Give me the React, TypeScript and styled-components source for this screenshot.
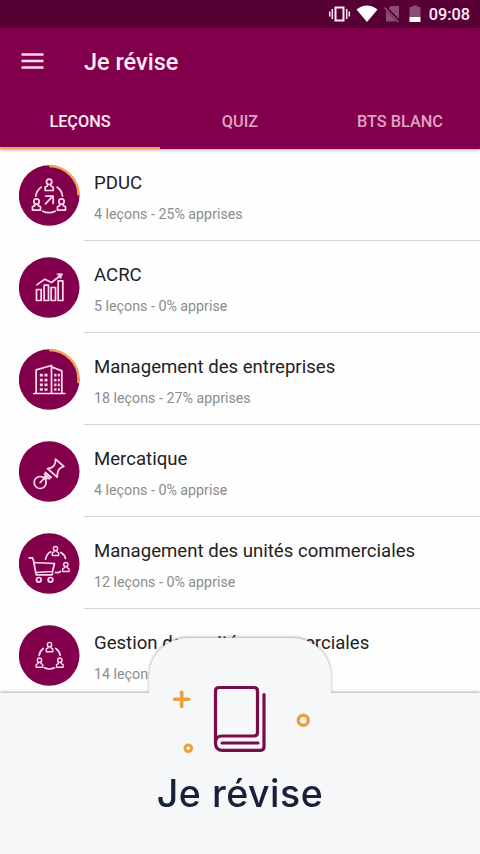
import { ReactNode } from 'react';
import styled, { createGlobalStyle } from 'styled-components';

const GlobalStyle = createGlobalStyle`
  * {
    box-sizing: border-box;
  }

  body {
    margin: 0;
    background-color: #fff;
    font-family: Roboto, 'Liberation Sans', sans-serif;
  }
`;

const Screen = styled.div`
  position: relative;
  display: flex;
  flex-direction: column;
  width: 480px;
  height: 854px;
  overflow: hidden;
  background-color: #fefefe;
`;

const StatusBar = styled.div`
  display: flex;
  justify-content: flex-end;
  align-items: center;
  flex-shrink: 0;
  height: 28px;
  padding-right: 10px;
  background-color: #560035;
`;

const Clock = styled.span`
  margin-left: 7px;
  padding-top: 2px;
  color: #ffeaf6;
  font-size: 16.3px;
  font-weight: 500;
  line-height: 20px;
`;

const Header = styled.header`
  z-index: 1;
  flex-shrink: 0;
  height: 121px;
  background-color: #82004b;
  box-shadow: 0 1px 3px rgba(0, 0, 0, 0.35);
`;

const Toolbar = styled.div`
  display: flex;
  align-items: center;
  height: 65px;
  padding-left: 21px;
`;

const MenuButton = styled.button`
  display: flex;
  padding: 0;
  border: 0;
  background: none;
`;

const Title = styled.h1`
  margin: 0 0 0 40px;
  padding-top: 2px;
  color: #ffeaf6;
  font-size: 23.5px;
  font-weight: 500;
`;

const Tabs = styled.nav`
  display: grid;
  grid-template-columns: repeat(3, 1fr);
  height: 56px;
`;

const Tab = styled.div<{ $active?: boolean }>`
  display: flex;
  justify-content: center;
  align-items: center;
  padding-top: 3px;
  border-bottom: 2px solid ${({ $active }) => ($active ? '#f1a263' : 'transparent')};
  color: ${({ $active }) => ($active ? '#ffeaf6' : '#e3a0c7')};
  font-size: 16.3px;
  font-weight: 500;
`;

const List = styled.main`
  display: flex;
  flex-direction: column;
  padding-top: 1px;
`;

const Row = styled.div`
  display: flex;
  flex-shrink: 0;
  height: 92px;
  padding: 15px 0 0 19px;
`;

const Info = styled.div`
  flex: 1;
  height: 76px;
  margin-left: 4px;
  padding: 6px 0 0 10px;
  border-bottom: 1px solid #d4d4d4;
`;

const Name = styled.div`
  color: #222;
  font-size: 18.6px;
  line-height: 24px;
  white-space: nowrap;
`;

const Detail = styled.div`
  margin-top: 9px;
  color: #8c8c8c;
  font-size: 14.25px;
  line-height: 20px;
`;

const BottomPanel = styled.footer`
  position: absolute;
  z-index: 2;
  right: 0;
  bottom: 0;
  left: 0;
  display: flex;
  flex-direction: column;
  align-items: center;
  height: 216px;
  filter: drop-shadow(0 -1px 1.5px rgba(0, 0, 0, 0.32));
`;

const Bump = styled.div`
  flex-shrink: 0;
  width: 182px;
  height: 55px;
  border-radius: 38px 38px 0 0;
  background-color: #f5f7f9;
`;

const PanelBody = styled.div`
  display: flex;
  flex-direction: column;
  align-items: center;
  width: 100%;
  height: 161px;
  background-color: #f5f7f9;
`;

const Illustration = styled.svg`
  flex-shrink: 0;
  margin-top: -13px;
`;

const Caption = styled.div`
  margin-top: 14px;
  color: #18203a;
  font-family: Inter, 'Liberation Sans', sans-serif;
  font-size: 37.5px;
  font-weight: 500;
  line-height: 48px;
  letter-spacing: 0.5px;
`;

type PersonProps = { x: number; y: number; size?: number };

// Head and shoulders, (x, y) is the centre of the head
const Person = ({ x, y, size = 1 }: PersonProps) => (
  <g transform={`translate(${x} ${y}) scale(${size})`}>
    <path d="M0 -9c5 0 8 4 8 8s-3 8-8 8-8-4-8-8 3-8 8-8z" />
    <path d="M-5 7v4l-7 4v10h24v-10l-7-4v-4" />
  </g>
);

const TeamIcon = () => (
  <>
    <Person x={118} y={81} />
    <Person x={80} y={140} />
    <Person x={155} y={140} />
    <path d="M78 123q2-17 16-27M142 96q14 9 16 27M99 168q19 9 37 0" />
    <path d="M107 146l22-23M108 123h22v22" />
  </>
);

const ChartIcon = () => (
  <>
    <path d="M80 127h14v33h-14zM103 114h13v46h-13zM124 121h13v39h-13zM145 101h14v59h-14z" />
    <path d="M81 113l24-17 20 10 27-21" />
    <path d="M142 80h16l-5 14z" fill="#ffd9ee" strokeWidth={2} />
  </>
);

const BuildingIcon = () => (
  <>
    <path d="M72 163h93M79 162v-70l46-13v83M125 83l31 12v67" />
    <path d="M90 108h25M90 123h25M90 137h25M90 151h25" strokeWidth={8} strokeDasharray="9 5" strokeLinecap="butt" />
    <path d="M133 108h17M133 123h17M133 137h17M133 151h17" strokeWidth={8} strokeDasharray="7 4" strokeLinecap="butt" />
  </>
);

const PinIcon = () => (
  <>
    <circle cx={91} cy={154} r={18} />
    <path d="M91 154l17-18" />
    <path d="M107 124l17 15M104 129l15 14M104 136l7 7" />
    <path d="M137 84l25 22q-12 3-16 11-4 8-4 21l-29-26q13 0 19-8 6-7 5-20z" />
  </>
);

const CartIcon = () => (
  <>
    <path d="M58 104h10l3 8 8 43h44q5 0 5-5M73 118l61 3-6 24-51 3" />
    <circle cx={87} cy={170} r={7} />
    <circle cx={122} cy={170} r={7} />
    <Person x={137} y={77} size={0.8} />
    <Person x={168} y={125} size={0.8} />
    <path d="M107 108q4-16 16-22M153 88q12 7 14 18M137 148q8 2 15-3" />
  </>
);

const NetworkIcon = () => (
  <>
    <Person x={119} y={89} size={0.82} />
    <Person x={89} y={136} size={0.82} />
    <Person x={150} y={136} size={0.82} />
    <path d="M88 121q1-12 12-21M138 100q11 8 13 20M104 158q15 7 30 0" />
  </>
);

type BadgeProps = { progress: number; children: ReactNode };

const Badge = ({ progress, children }: BadgeProps) => (
  <svg width={61} height={61} viewBox="27.5 29.5 183 183" fill="none">
    <circle cx={118} cy={121} r={91} fill="#82004b" />
    {progress > 0 && (
      <circle
        cx={118}
        cy={121}
        r={88}
        stroke="#f2a353"
        strokeWidth={7}
        pathLength={100}
        strokeDasharray={`${progress} 100`}
        transform="rotate(-90 118 121)"
      />
    )}
    <g stroke="#ffd9ee" strokeWidth={5.2} strokeLinecap="round" strokeLinejoin="round">
      {children}
    </g>
  </svg>
);

const lessons = [
  { name: 'PDUC', detail: '4 leçons - 25% apprises', progress: 25, icon: <TeamIcon /> },
  { name: 'ACRC', detail: '5 leçons - 0% apprise', progress: 0, icon: <ChartIcon /> },
  {
    name: 'Management des entreprises',
    detail: '18 leçons - 27% apprises',
    progress: 27,
    icon: <BuildingIcon />,
  },
  { name: 'Mercatique', detail: '4 leçons - 0% apprise', progress: 0, icon: <PinIcon /> },
  {
    name: 'Management des unités commerciales',
    detail: '12 leçons - 0% apprise',
    progress: 0,
    icon: <CartIcon />,
  },
  {
    name: 'Gestion des unités commerciales',
    detail: '14 leçons - 0% apprise',
    progress: 0,
    icon: <NetworkIcon />,
  },
];

const StatusIcons = () => (
  <svg width={94} height={20} viewBox="328 4 94 20" fill="none">
    <path d="M335.5 7.5h8v13h-8z" stroke="#ffeaf6" strokeWidth={2} />
    <path d="M332.3 9v10M329.7 11.5v5M346.7 9v10M349.3 11.5v5" stroke="#ffeaf6" strokeWidth={1.5} />
    <path d="M356.5 9.5q10.5-8 21 0l-10.5 12.5z" fill="#fff" />
    <path d="M386 11l5-5h8v15.5h-13z" fill="#8d4c73" />
    <path d="M384.5 6.5l15 15.5" stroke="#560035" strokeWidth={3.5} />
    <path d="M384.5 7.5l14 14.5" stroke="#8d4c73" strokeWidth={1.6} />
    <path d="M409.5 7h3v-1.5h5v1.5h3v10h-11z" fill="#8d4c73" />
    <path d="M409.5 17h11v5h-11z" fill="#fff" />
  </svg>
);

const App = () => (
  <>
    <GlobalStyle />
    <Screen>
      <StatusBar>
        <StatusIcons />
        <Clock>09:08</Clock>
      </StatusBar>
      <Header>
        <Toolbar>
          <MenuButton aria-label="Menu">
            <svg width={23} height={18} viewBox="0 0 23 18">
              <path d="M0.5 2.5h22M0.5 9h22M0.5 15.5h22" stroke="#ffd9ee" strokeWidth={2.5} />
            </svg>
          </MenuButton>
          <Title>Je révise</Title>
        </Toolbar>
        <Tabs>
          <Tab $active>LEÇONS</Tab>
          <Tab>QUIZ</Tab>
          <Tab>BTS BLANC</Tab>
        </Tabs>
      </Header>
      <List>
        {lessons.map(({ name, detail, progress, icon }) => (
          <Row key={name}>
            <Badge progress={progress}>{icon}</Badge>
            <Info>
              <Name>{name}</Name>
              <Detail>{detail}</Detail>
            </Info>
          </Row>
        ))}
      </List>
      <BottomPanel>
        <Bump />
        <PanelBody>
          <Illustration width={142} height={76} viewBox="169 680 142 76" fill="none" strokeLinecap="round" strokeLinejoin="round">
            <path
              d="M215.500 744V691q0-3.500 3.500-3.500h35q3.500 0 3.500 3.500v41.500q0 3.500-3.500 3.500h-32q-6.500 0-6.500 7t6.500 7.300h38.500q3.500 0 3.500-3.500V694.500M222 743h36"
              stroke="#7b0c4b"
              strokeWidth={3.200}
            />
            <path d="M181.700 692.200v14.200M174.600 699.300h14.200" stroke="#e8a040" strokeWidth={3.600} />
            <circle cx={303.300} cy={720.300} r={5} stroke="#e8a040" strokeWidth={3.400} />
            <circle cx={188.300} cy={748.300} r={3.300} stroke="#e8a040" strokeWidth={3} />
          </Illustration>
          <Caption>Je révise</Caption>
        </PanelBody>
      </BottomPanel>
    </Screen>
  </>
);

export default App;
